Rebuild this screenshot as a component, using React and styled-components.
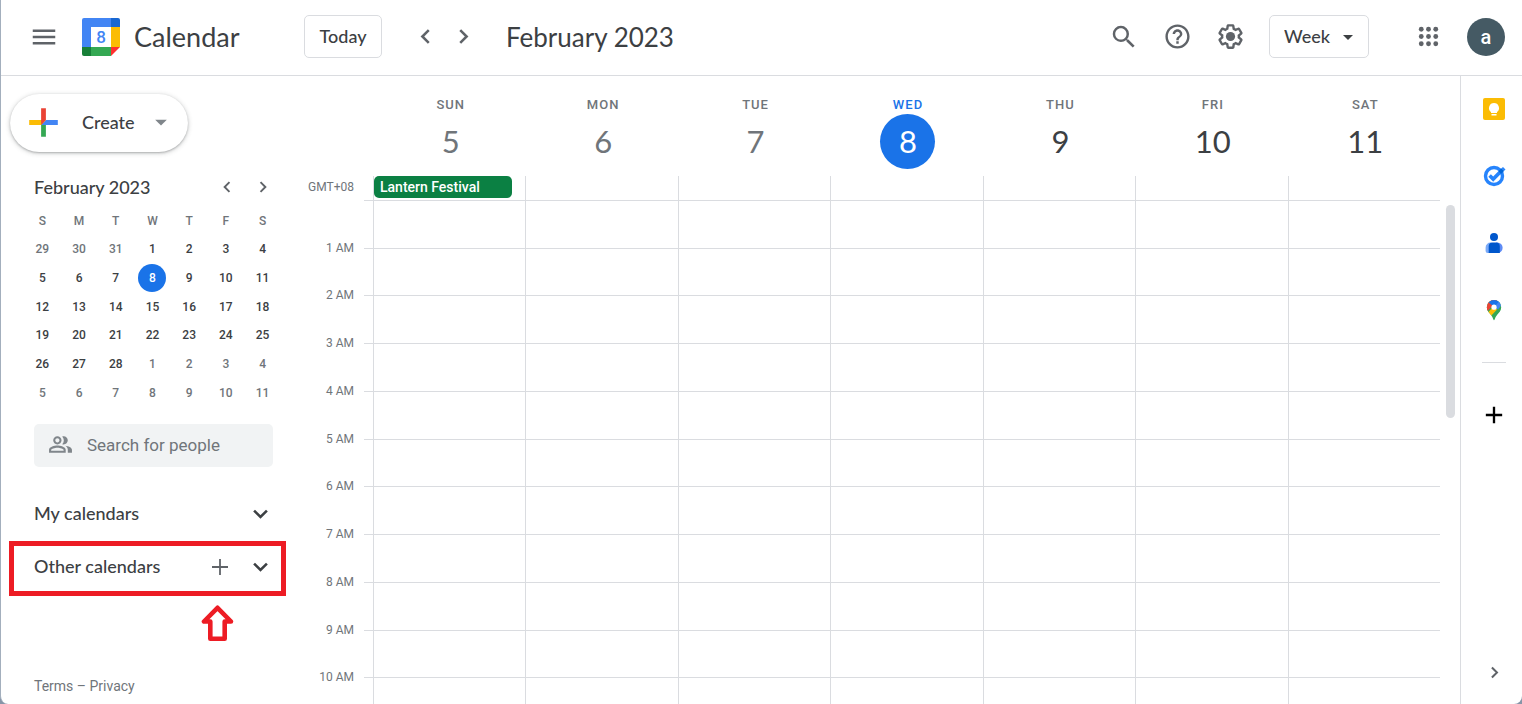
import styled, { createGlobalStyle, css } from 'styled-components';
import {
  MdAdd,
  MdArrowDropDown,
  MdHelpOutline,
  MdMenu,
  MdOutlinePeopleAlt,
  MdSearch,
} from 'react-icons/md';

const display = "Lato, 'Open Sans', sans-serif";
const lineColor = '#dadce0';
const ink = '#3c4043';
const muted = '#70757a';
const blue = '#1a73e8';
const red = '#ed1c24';

const GlobalStyle = createGlobalStyle`
  * {
    box-sizing: border-box;
  }

  body {
    margin: 0;
    background-color: #8795a8;
    color: ${ink};
    font-family: Roboto, sans-serif;
  }

  button {
    padding: 0;
    border: none;
    background: none;
    color: inherit;
    font: inherit;
    cursor: pointer;
  }
`;

const Page = styled.div`
  height: 100vh;
  display: flex;
  flex-direction: column;
  overflow: hidden;
  background-color: #fff;
  border-left: 1px solid #a3afbd;
  border-radius: 0 0 8px 8px;
`;

const TopBar = styled.header`
  display: flex;
  align-items: center;
  height: 76px;
  flex-shrink: 0;
  padding: 0 17px 2px 19px;
  border-bottom: 1px solid ${lineColor};
`;

const IconButton = styled.button`
  display: flex;
  align-items: center;
  justify-content: center;
  flex-shrink: 0;
  width: ${({ $size }) => $size || 48}px;
  height: ${({ $size }) => $size || 48}px;
  border-radius: 50%;
  color: ${({ $color }) => $color || '#5f6368'};
`;

const Brand = styled.div`
  display: flex;
  align-items: center;
  gap: 14px;
  width: 236px;
  padding-left: 14px;
  font-family: ${display};
  font-size: 27px;
`;

const outlined = css`
  height: 43px;
  border: 1px solid ${lineColor};
  border-radius: 5px;
  color: ${ink};
  font-family: ${display};
  font-size: 18px;
  font-weight: 500;
`;

const TodayButton = styled.button`
  && {
    ${outlined}
    width: 78px;
    padding-bottom: 2px;
  }
`;

const Pager = styled.div`
  display: flex;
  margin-left: 24px;
`;

const Title = styled.h1`
  margin: 0 auto 0 24px;
  font-family: ${display};
  font-size: 26px;
  font-weight: 400;
`;

const Tools = styled.div`
  display: flex;
  gap: 5px;
  margin-right: 15px;
`;

const SelectBox = styled.div`
  position: relative;
  margin-right: 35px;

  select {
    ${outlined}
    width: 100px;
    padding: 0 14px 2px;
    appearance: none;
    background-color: #fff;
  }

  svg {
    position: absolute;
    top: 10px;
    right: 9px;
    pointer-events: none;
  }
`;

const Avatar = styled.button`
  && {
    width: 38px;
    height: 38px;
    margin-left: 15px;
    border-radius: 50%;
    background-color: #455a64;
    color: #fff;
    font-size: 20px;
    font-weight: 500;
  }
`;

const Body = styled.div`
  display: flex;
  flex: 1;
  min-height: 0;
`;

const Sidebar = styled.aside`
  display: flex;
  flex-direction: column;
  width: 299px;
  flex-shrink: 0;
  padding: 18px 18px 8px 9px;
`;

const CreateButton = styled.button`
  && {
    display: flex;
    align-items: center;
    flex-shrink: 0;
    width: 178px;
    height: 58px;
    padding: 0 0 2px 12px;
    border-radius: 29px;
    box-shadow: 0 1px 2px rgba(60, 64, 67, 0.3), 0 1px 4px 1px rgba(60, 64, 67, 0.18);
    font-family: ${display};
    font-size: 18px;
    font-weight: 500;
  }

  span {
    flex: 1;
    margin-left: 17px;
    text-align: left;
  }

  svg:last-child {
    margin-right: 13px;
    color: #80868b;
  }
`;

const MonthHead = styled.div`
  display: flex;
  align-items: center;
  height: 36px;
  margin: 17px 0 2px 24px;
  padding-right: 1px;

  h2 {
    flex: 1;
    margin: 0;
    font-family: ${display};
    font-size: 18px;
    font-weight: 500;
  }
`;

const MonthTable = styled.table`
  width: 257px;
  height: 200px;
  margin-left: 14px;
  border-collapse: collapse;
  table-layout: fixed;
  font-size: 12px;
  font-weight: 500;

  th,
  td {
    height: 28px;
    padding: 0;
    text-align: center;
    font-weight: 500;
  }

  th {
    color: ${muted};
  }
`;

const Day = styled.button`
  && {
    width: 28px;
    height: 28px;
    display: block;
    margin: 0 auto;
    border-radius: 50%;
    color: ${({ $today, $outside }) => ($today ? '#fff' : $outside ? muted : ink)};
    background-color: ${({ $today }) => ($today ? blue : 'transparent')};
  }
`;

const PeopleSearch = styled.label`
  display: flex;
  align-items: center;
  gap: 14px;
  height: 43px;
  flex-shrink: 0;
  margin: 17px 9px 0 24px;
  padding: 0 14px 2px;
  border-radius: 5px;
  background-color: #f1f3f4;
  color: #80868b;

  svg {
    flex-shrink: 0;
  }

  input {
    width: 100%;
    min-width: 0;
    padding: 0;
    border: none;
    outline: none;
    background: none;
    font-family: Roboto, sans-serif;
    font-size: 17px;
    color: ${ink};
  }

  input::placeholder {
    color: ${muted};
    opacity: 1;
  }
`;

const ListRow = styled.div`
  position: relative;
  display: flex;
  align-items: center;
  height: 53px;
  flex-shrink: 0;
  padding: 0 2px 0 24px;
  margin-top: ${({ $first }) => ($first ? 20 : 0)}px;

  h3 {
    flex: 1;
    margin: 0;
    padding-bottom: 2px;
    font-family: ${display};
    font-size: 18px;
    font-weight: 500;
  }
`;

const Highlight = styled.span`
  position: absolute;
  inset: 1px -4px -3px -1px;
  border: 5px solid ${red};
  pointer-events: none;
`;

const Pointer = styled.svg`
  position: absolute;
  top: 65px;
  left: 191px;
`;

const Footer = styled.footer`
  margin: auto 0 0 24px;
  color: ${muted};
  font-size: 14px;
  line-height: 20px;

  a {
    color: inherit;
    text-decoration: none;
  }
`;

const Week = styled.main`
  display: flex;
  flex-direction: column;
  flex: 1;
  min-width: 0;
`;

const weekColumns = css`
  display: grid;
  grid-template-columns: 64px 9px repeat(7, 1fr) 20px;
`;

const DayHeads = styled.div`
  ${weekColumns}
  height: 100px;
  flex-shrink: 0;
`;

const DayHead = styled.div`
  display: flex;
  flex-direction: column;
  align-items: center;
  padding: 20px 0 0 3px;
  color: ${({ $today, $past }) => ($today ? blue : $past ? muted : ink)};

  span {
    color: ${({ $today }) => ($today ? blue : muted)};
    font-size: 13px;
    font-weight: 500;
    line-height: 18px;
    letter-spacing: 1px;
  }

  strong {
    width: 55px;
    height: 55px;
    border-radius: 50%;
    background-color: ${({ $today }) => ($today ? blue : 'transparent')};
    color: ${({ $today }) => ($today ? '#fff' : 'inherit')};
    font-family: ${display};
    font-size: 31px;
    font-weight: 400;
    line-height: 54px;
    text-align: center;
  }
`;

const AllDay = styled.div`
  ${weekColumns}
  height: 25px;
  flex-shrink: 0;
`;

const Label = styled.span`
  align-self: end;
  margin-bottom: ${({ $hour }) => ($hour ? -7 : 6)}px;
  padding-right: 10px;
  color: ${muted};
  font-size: 12px;
  line-height: 16px;
  text-align: right;
`;

const Tick = styled.i`
  border-bottom: 1px solid ${lineColor};
`;

const Cell = styled.div`
  border-bottom: 1px solid ${lineColor};
  border-left: 1px solid ${lineColor};
`;

const Event = styled.button`
  && {
    display: block;
    width: calc(100% - 13px);
    height: 22px;
    padding-left: 6px;
    border-radius: 5px;
    background-color: #0b8043;
    color: #fff;
    font-size: 14px;
    font-weight: 500;
    text-align: left;
    white-space: nowrap;
  }
`;

const Hours = styled.div`
  position: relative;
  flex: 1;
  min-height: 0;
  overflow: hidden;
`;

const HourGrid = styled.div`
  display: grid;
  grid-template-rows: repeat(11, 1fr);
  height: 525px;
`;

const HourRow = styled.div`
  ${weekColumns}
`;

const Thumb = styled.div`
  position: absolute;
  top: 4px;
  right: 5px;
  width: 9px;
  height: 213px;
  border-radius: 5px;
  background-color: ${lineColor};
`;

const SidePanel = styled.aside`
  display: flex;
  flex-direction: column;
  align-items: center;
  width: 62px;
  flex-shrink: 0;
  padding: 9px 0 8px 5px;
  border-left: 1px solid ${lineColor};

  hr {
    width: 24px;
    margin: 28px 0;
    border: none;
    border-top: 1px solid ${lineColor};
  }

  > :last-child {
    margin-top: auto;
  }
`;

const PanelApps = styled.div`
  display: flex;
  flex-direction: column;
  gap: 19px;
`;

const dayNames = ['SUN', 'MON', 'TUE', 'WED', 'THU', 'FRI', 'SAT'];
const monthWeeks = [
  [29, 30, 31, 1, 2, 3, 4],
  [5, 6, 7, 8, 9, 10, 11],
  [12, 13, 14, 15, 16, 17, 18],
  [19, 20, 21, 22, 23, 24, 25],
  [26, 27, 28, 1, 2, 3, 4],
  [5, 6, 7, 8, 9, 10, 11],
];
// the last row is cut by the window, so it has no label
const hours = ['1 AM', '2 AM', '3 AM', '4 AM', '5 AM', '6 AM', '7 AM', '8 AM', '9 AM', '10 AM', ''];

const isOutside = (week, date) =>
  (week === 0 && date > 20) || (week === 4 && date < 10) || week === 5;

const chevrons = {
  left: 'M14.7 6.7L9.4 12l5.3 5.3',
  right: 'M9.3 6.7l5.3 5.3-5.3 5.3',
  down: 'M6.7 9.6l5.3 5.3 5.3-5.3',
};

const Chevron = ({ to, size }) => (
  <svg width={size} height={size} viewBox="0 0 24 24" fill="none">
    <path d={chevrons[to]} stroke="currentColor" strokeWidth="2.1" />
  </svg>
);

const CalendarLogo = () => (
  <svg width="38" height="39" viewBox="0 -1 38 39">
    <path d="M9 9h20v20H9z" fill="#fff" />
    <path d="M2 0h27v9H9v20H0V2a2 2 0 0 1 2-2z" fill="#4285f4" />
    <path d="M29 0h7a2 2 0 0 1 2 2v7h-9z" fill="#1967d2" />
    <path d="M29 9h9v20h-9z" fill="#fbbc04" />
    <path d="M9 29h20v9H9z" fill="#34a853" />
    <path d="M0 29h9v9H2a2 2 0 0 1-2-2z" fill="#188038" />
    <path d="M29 29h9l-9 9z" fill="#ff2f2f" />
    <text x="19" y="25" fill="#4285f4" fontFamily="Roboto" fontSize="17" fontWeight="500" textAnchor="middle">
      8
    </text>
  </svg>
);

const PlusLogo = () => (
  <svg width="43" height="43" viewBox="0 0 36 36">
    <path d="M16 16v14h4V20z" fill="#34a853" />
    <path d="M30 16H20l-4 4h14z" fill="#4285f4" />
    <path d="M6 16v4h10l4-4z" fill="#fbbc05" />
    <path d="M20 16V6h-4v14z" fill="#ea4335" />
  </svg>
);

const AppsIcon = () => (
  <svg width="29" height="29" viewBox="0 0 24 24" fill="currentColor">
    {[6, 12, 18].map((y) => [6, 12, 18].map((x) => <circle key={x + '-' + y} cx={x} cy={y} r="2" />))}
  </svg>
);

const GearIcon = () => (
  <svg width="29" height="29" viewBox="0 0 24 24" fill="currentColor">
    <path d="M13.85 22.25h-3.7c-.74 0-1.36-.54-1.45-1.27l-.27-1.89c-.27-.14-.53-.29-.79-.46l-1.8.72c-.7.26-1.47-.03-1.81-.65L2.2 15.53c-.35-.66-.2-1.44.36-1.88l1.53-1.19c-.01-.15-.02-.3-.02-.46 0-.15.01-.31.02-.46l-1.52-1.19c-.59-.45-.74-1.26-.37-1.88l1.85-3.19c.34-.62 1.11-.9 1.79-.63l1.81.73c.26-.17.52-.32.78-.46l.27-1.91c.09-.7.71-1.25 1.44-1.25h3.7c.74 0 1.36.54 1.45 1.27l.27 1.89c.27.14.53.29.79.46l1.8-.72c.71-.26 1.48.03 1.82.65l1.84 3.18c.36.66.2 1.44-.36 1.88l-1.52 1.19c.01.15.02.3.02.46s-.01.31-.02.46l1.52 1.19c.56.45.72 1.23.37 1.86l-1.86 3.22c-.34.62-1.11.9-1.8.63l-1.8-.72c-.26.17-.52.32-.78.46l-.27 1.91c-.1.68-.72 1.22-1.46 1.22zm-3.23-2h2.76l.37-2.55.53-.22c.44-.18.88-.44 1.34-.78l.45-.34 2.38.96 1.38-2.4-2.03-1.58.07-.56c.03-.26.06-.51.06-.78s-.03-.53-.06-.78l-.07-.56 2.03-1.58-1.39-2.4-2.39.96-.45-.35c-.42-.32-.87-.58-1.33-.77l-.52-.22-.37-2.55h-2.76l-.37 2.55-.53.21c-.44.19-.88.44-1.34.79l-.45.33-2.38-.95-1.39 2.39 2.03 1.58-.07.56a7 7 0 0 0-.06.79c0 .26.02.53.06.78l.07.56-2.03 1.58 1.38 2.4 2.39-.96.45.35c.43.33.86.58 1.33.77l.53.22.38 2.55z" />
    <circle cx="12" cy="12" r="3.8" />
  </svg>
);

const ThinPlusIcon = () => (
  <svg width="18" height="18" viewBox="0 0 18 18">
    <path d="M9 1v16M1 9h16" stroke="currentColor" strokeWidth="1.8" />
  </svg>
);

const KeepIcon = () => (
  <svg width="24" height="24" viewBox="0 0 24 24">
    <rect x="1" y="1" width="22" height="22" rx="2" fill="#fbbc04" />
    <path d="M12 6a5 5 0 0 0-3 9v1h6v-1a5 5 0 0 0-3-9zM9.500 17h5v1.500h-5z" fill="#fff" />
  </svg>
);

const TasksIcon = () => (
  <svg width="24" height="24" viewBox="0 0 24 24" fill="none">
    <circle cx="12" cy="12" r="8.5" stroke="#2684fc" strokeWidth="3.4" />
    <path d="M7.600 11.500l3.600 3.600 9-9" stroke="#2684fc" strokeWidth="3.6" />
    <path d="M16.500 7.300l3-3 2.700 2.500-3.200 3.300z" fill="#0066da" />
    <path d="M19.500 4.300l1.500-1.400 2.500 2.500-1.300 1.400z" fill="#2684fc" />
  </svg>
);

const ContactsIcon = () => (
  <svg width="24" height="24" viewBox="0 0 24 24">
    <circle cx="12" cy="6" r="4" fill="#0057cc" />
    <path d="M9.500 11.500H8.600a5 5 0 0 0-5 5V20a2 2 0 0 0 2 2H10z" fill="#7baaf7" />
    <path d="M14 11.500h1.400a5 5 0 0 1 0 10.500H14z" fill="#5e8bf5" />
    <path d="M10.500 11.500h3.500a3.800 3.800 0 0 1 3.800 3.800V22H6.700v-6.700a3.800 3.800 0 0 1 3.800-3.800z" fill="#0057cc" />
  </svg>
);

const MapsIcon = () => (
  <svg width="24" height="24" viewBox="0 0 24 24">
    <defs>
      <clipPath id="pin">
        <path d="M12 2a7.200 7.200 0 0 0-7.200 7.200c0 3.300 2 5.200 4 7.600 1.300 1.700 2 3 2.500 4.500.2.700.4 1 .7 1s.5-.3.7-1c.5-1.500 1.200-2.800 2.500-4.500 2-2.400 4-4.300 4-7.600A7.200 7.200 0 0 0 12 2z" />
      </clipPath>
    </defs>
    <g clipPath="url(#pin)">
      <path d="M0 0h24v24H0z" fill="#34a853" />
      <path d="M0 19L18 0H0z" fill="#ea4335" />
      <path d="M4 16.500L12 8l3 3.500-7.500 8z" fill="#fbbc04" />
      <path d="M6.500 4.200L12 9l7-6-7-3z" fill="#1a73e8" />
      <path d="M12 9l6-6.500 2 4-4 5z" fill="#4285f4" />
    </g>
    <circle cx="12" cy="9.2" r="2.6" fill="#fff" />
  </svg>
);

const App = () => (
  <>
    <GlobalStyle />
    <Page>
      <TopBar>
        <IconButton aria-label="Main menu">
          <MdMenu size={30} />
        </IconButton>
        <Brand>
          <CalendarLogo />
          <span>Calendar</span>
        </Brand>
        <TodayButton>Today</TodayButton>
        <Pager>
          <IconButton $size={38} aria-label="Previous week">
            <Chevron to="left" size={29} />
          </IconButton>
          <IconButton $size={38} aria-label="Next week">
            <Chevron to="right" size={29} />
          </IconButton>
        </Pager>
        <Title>February 2023</Title>
        <Tools>
          <IconButton aria-label="Search">
            <MdSearch size={30} />
          </IconButton>
          <IconButton aria-label="Support">
            <MdHelpOutline size={29} />
          </IconButton>
          <IconButton aria-label="Settings">
            <GearIcon />
          </IconButton>
        </Tools>
        <SelectBox>
          <select aria-label="View" defaultValue="Week">
            <option>Week</option>
          </select>
          <MdArrowDropDown size={24} />
        </SelectBox>
        <IconButton aria-label="Google apps">
          <AppsIcon />
        </IconButton>
        <Avatar aria-label="Account">a</Avatar>
      </TopBar>
      <Body>
        <Sidebar>
          <CreateButton>
            <PlusLogo />
            <span>Create</span>
            <MdArrowDropDown size={28} />
          </CreateButton>
          <MonthHead>
            <h2>February 2023</h2>
            <IconButton $size={36} aria-label="Previous month">
              <Chevron to="left" size={22} />
            </IconButton>
            <IconButton $size={36} aria-label="Next month">
              <Chevron to="right" size={22} />
            </IconButton>
          </MonthHead>
          <MonthTable>
            <thead>
              <tr>
                {dayNames.map((name) => (
                  <th key={name}>{name[0]}</th>
                ))}
              </tr>
            </thead>
            <tbody>
              {monthWeeks.map((week, row) => (
                <tr key={row}>
                  {week.map((date) => (
                    <td key={date}>
                      <Day $today={row === 1 && date === 8} $outside={isOutside(row, date)}>
                        {date}
                      </Day>
                    </td>
                  ))}
                </tr>
              ))}
            </tbody>
          </MonthTable>
          <PeopleSearch>
            <MdOutlinePeopleAlt size={25} />
            <input type="text" placeholder="Search for people" aria-label="Search for people" />
          </PeopleSearch>
          <ListRow $first>
            <h3>My calendars</h3>
            <IconButton $size={40} $color={ink} aria-label="Expand my calendars">
              <Chevron to="down" size={29} />
            </IconButton>
          </ListRow>
          <ListRow>
            <h3>Other calendars</h3>
            <IconButton $size={40} aria-label="Add other calendars">
              <ThinPlusIcon />
            </IconButton>
            <IconButton $size={40} $color={ink} aria-label="Expand other calendars">
              <Chevron to="down" size={29} />
            </IconButton>
            <Highlight />
            <Pointer width="34" height="37" viewBox="0 0 34 37">
              <path
                d="M16.5 2.800L3 16.500h6.300v17.200h14.400V16.500H30z"
                fill="#fff"
                stroke={red}
                strokeWidth="4.6"
                strokeLinejoin="round"
              />
            </Pointer>
          </ListRow>
          <Footer>
            <a href="#terms">Terms</a> – <a href="#privacy">Privacy</a>
          </Footer>
        </Sidebar>
        <Week>
          <DayHeads>
            <span />
            <span />
            {dayNames.map((name, i) => (
              <DayHead key={name} $past={i < 3} $today={i === 3}>
                <span>{name}</span>
                <strong>{i + 5}</strong>
              </DayHead>
            ))}
          </DayHeads>
          <AllDay>
            <Label>GMT+08</Label>
            <Tick />
            {dayNames.map((name, i) => (
              <Cell key={name}>{i === 0 && <Event>Lantern Festival</Event>}</Cell>
            ))}
          </AllDay>
          <Hours>
            <HourGrid>
              {hours.map((hour) => (
                <HourRow key={hour}>
                  <Label $hour>{hour}</Label>
                  <Tick />
                  {dayNames.map((name) => (
                    <Cell key={name} />
                  ))}
                </HourRow>
              ))}
            </HourGrid>
            <Thumb />
          </Hours>
        </Week>
        <SidePanel>
          <PanelApps>
            <IconButton aria-label="Keep">
              <KeepIcon />
            </IconButton>
            <IconButton aria-label="Tasks">
              <TasksIcon />
            </IconButton>
            <IconButton aria-label="Contacts">
              <ContactsIcon />
            </IconButton>
            <IconButton aria-label="Maps">
              <MapsIcon />
            </IconButton>
          </PanelApps>
          <hr />
          <IconButton $color="#000" aria-label="Get add-ons">
            <MdAdd size={28} />
          </IconButton>
          <IconButton aria-label="Hide side panel">
            <Chevron to="right" size={23} />
          </IconButton>
        </SidePanel>
      </Body>
    </Page>
  </>
);

export default App;
